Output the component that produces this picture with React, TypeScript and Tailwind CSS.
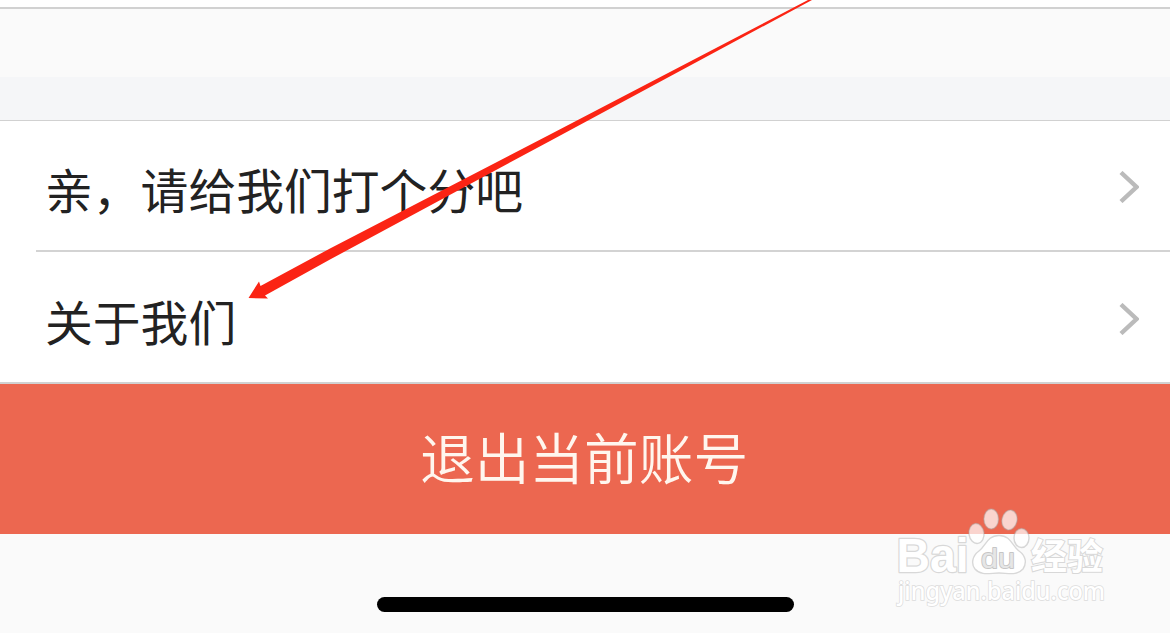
function Chevron(){
    return(
        <svg className="mt-[3px] h-8 w-5 shrink-0" viewBox="0 0 20 32" fill="none">
            <path d="M2 1.5 L17.5 16 L2 30.5" stroke="#bbbbbb" strokeWidth="4.4" />
        </svg>
    )
}

function Row({ label }: { label: string }){
    return(
        <div className="flex h-full items-center justify-between pl-[45px] pr-[31px]">
            <span className="pt-[7px] text-[47.8px] leading-none text-[#222222]">{label}</span>
            <Chevron />
        </div>
    )
}

function Arrow(){
    return(
        <svg className="absolute left-0 top-0" width="1170" height="633" viewBox="0 0 1170 633">
            <path d="M248.500 298 L259 281.500 L260.500 286 L330 248.500 L550 134.500 L808 0 L812 0 L550 141 L330 259.500 L265 295.500 L268 298.500 Z" fill="#fb2414" />
        </svg>
    )
}

function Watermark(){
    return(
        <svg className="absolute left-[880px] top-[500px]" width="240" height="120" viewBox="0 0 240 120">
            <g fill="#ffffff" stroke="#d8d8d8" strokeWidth="1.4">
                <g fillOpacity="0.72" stroke="#a8a8a8" strokeOpacity="0.45">
                    <ellipse cx="96.500" cy="33.500" rx="7.500" ry="10" transform="rotate(-8 96.5 33.5)" />
                    <ellipse cx="111.200" cy="19" rx="7.300" ry="10" />
                    <ellipse cx="129.500" cy="20" rx="7.500" ry="10" transform="rotate(12 129.5 20)" />
                    <ellipse cx="141.500" cy="38" rx="7.500" ry="9.500" />
                </g>
                <path d="M119 35.500 C107 35.500 106 46 99 51 C92 56 91 64 95 69 C101 76 110 73 119 73 C128 73 137 76 143 69 C147 63 146 56 139 51 C132 46 131 35.500 119 35.500 Z" />
                <g strokeWidth="2.5" paintOrder="stroke" strokeLinejoin="round" className="font-['Liberation_Sans',sans-serif]">
                    <text x="16.500" y="72" fontSize="48" fontWeight="700" textLength="72" lengthAdjust="spacingAndGlyphs">Bai</text>
                    <text x="101" y="67.500" fontSize="28" fontWeight="400" textLength="34" lengthAdjust="spacingAndGlyphs" fill="#e6e6e6" stroke="#c6c6c6" strokeWidth="1.8">du</text>
                </g>
                <text x="151" y="70" fontSize="36" fontWeight="700" textLength="72" lengthAdjust="spacingAndGlyphs" strokeWidth="2" paintOrder="stroke" className="font-['Noto_Sans_CJK_SC',sans-serif]">经验</text>
                <text x="18" y="100" fontSize="25" fontWeight="500" textLength="207" lengthAdjust="spacingAndGlyphs" strokeWidth="1.6" stroke="#dcdcdc" paintOrder="stroke" className="font-['Noto_Sans',sans-serif]">jingyan.baidu.com</text>
            </g>
        </svg>
    )
}

export default function App(){
    return(
        <main className="relative flex h-[633px] w-[1170px] flex-col overflow-hidden bg-[#fafafa] font-['Noto_Sans_CJK_SC',sans-serif]">
            <div className="h-[9px] border-b-2 border-[#d1d1d1] bg-white" />
            <div className="h-[68px] bg-[#fafafa]" />
            <div className="h-[43px] bg-[#f5f6f8]" />

            <section className="border-y border-[#d1d1d1] border-b-2 bg-white">
                <div className="h-[129px]">
                    <Row label="亲，请给我们打个分吧" />
                </div>
                <div className="ml-9 h-0.5 bg-[#d3d3d3]" />
                <div className="h-[130px]">
                    <Row label="关于我们" />
                </div>
            </section>

            <button className="flex h-[150px] items-center justify-center bg-[#ec6750] pr-0.5 pb-[5px] text-[54.7px] font-[350] leading-none text-[#fff6ee]">
                退出当前账号
            </button>

            <div className="mx-auto mt-[63px] h-[15px] w-[417px] rounded-full bg-black" />

            <Arrow />
            <Watermark />
        </main>
    )
}
